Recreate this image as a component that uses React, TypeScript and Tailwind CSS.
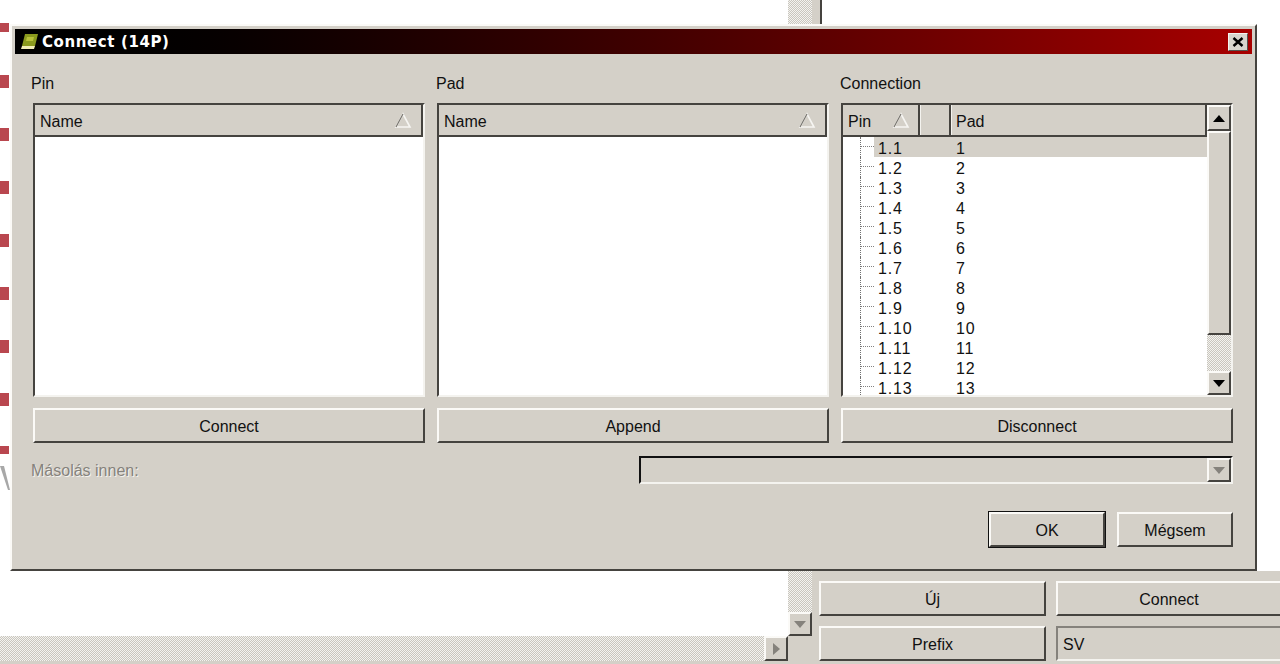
const FONT = "font-['Liberation_Sans',Arial,sans-serif]";
const RAISED = "border-2 border-t-[#fbfaf7] border-l-[#fbfaf7] border-r-[#45433f] border-b-[#45433f] bg-[#d4d0c8]";
const CHECKER = "bg-[image:repeating-conic-gradient(#c9c6be_0_25%,#f4f3f0_0_50%)] bg-[length:2px_2px]";

function Btn({ label, className = "" }: { label: string; className?: string }) {
  return (
    <div className={`${RAISED} flex items-center justify-center pt-[2px] text-[16px] text-[#111] ${className}`}>
      {label}
    </div>
  );
}

function SortMark() {
  return (
    <svg width="18" height="17" viewBox="0 0 18 17" className="shrink-0">
      <path d="M2 15 L16 15 L9 2 Z" fill="none" stroke="#f6f5f2" strokeWidth="1.6" />
      <path d="M2 15 L9 2" fill="none" stroke="#77746e" strokeWidth="1.2" />
    </svg>
  );
}

function Arrow({ dir, color = "#000", w = 14, h = 8 }: { dir: "up" | "down" | "right"; color?: string; w?: number; h?: number }) {
  const d =
    dir === "up"
      ? `M0 ${h} L${w} ${h} L${w / 2} 0 Z`
      : dir === "down"
      ? `M0 0 L${w} 0 L${w / 2} ${h} Z`
      : `M0 0 L${w} ${h / 2} L0 ${h} Z`;
  return (
    <svg width={w} height={h} viewBox={`0 0 ${w} ${h}`}>
      <path d={d} fill={color} />
    </svg>
  );
}

function EmptyList() {
  return (
    <div className="h-[294px] border-2 border-t-[#45433f] border-l-[#45433f] border-r-[#f4f3ef] border-b-[#f4f3ef] bg-white flex flex-col">
      <div className="h-[32px] shrink-0 border-b-2 border-b-[#45433f] border-r-2 border-r-[#45433f] bg-[#d4d0c8] flex items-center justify-between pl-[5px] pr-[9px] text-[16px] text-[#111]">
        <span className="pt-[4px]">Name</span>
        <SortMark />
      </div>
    </div>
  );
}

const rows = Array.from({ length: 13 }, (_, i) => ({ pin: `1.${i + 1}`, pad: `${i + 1}` }));

function ConnectionList() {
  return (
    <div className="h-[294px] border-2 border-t-[#45433f] border-l-[#45433f] border-r-[#f4f3ef] border-b-[#f4f3ef] bg-white flex overflow-hidden">
      <div className="flex-1 min-w-0 flex flex-col overflow-hidden">
        <div className="h-[32px] shrink-0 flex text-[16px] text-[#111] bg-[#d4d0c8] border-b-2 border-b-[#45433f]">
          <div className="w-[77px] flex items-center justify-between pl-[5px] pr-[8px] border-r-2 border-r-[#45433f]">
            <span className="pt-[4px]">Pin</span>
            <SortMark />
          </div>
          <div className="w-[31px] border-l border-l-[#f4f3ef] border-r-2 border-r-[#45433f]" />
          <div className="flex-1 flex items-center pl-[4px] border-l border-l-[#f4f3ef] border-r-2 border-r-[#45433f]">
            <span className="pt-[4px]">Pad</span>
          </div>
        </div>
        <div className="flex-1 overflow-hidden text-[16px] tracking-[0.8px] text-[#111]">
          {rows.map((r, i) => (
            <div key={r.pin} className="h-[20px] flex pl-[17px] leading-[20px]">
              <div className="w-[14px] h-[20px] shrink-0 border-l border-dotted border-l-[#707070]">
                <div className="h-[10px] border-b border-dotted border-b-[#808080]" />
              </div>
              <div className={`flex-1 flex ${i === 0 ? "bg-[#d4d0c8]" : ""}`}>
                <span className="w-[82px] pl-[4px] pt-[2px]">{r.pin}</span>
                <span className="pt-[2px]">{r.pad}</span>
              </div>
            </div>
          ))}
        </div>
      </div>
      <div className="w-[24px] shrink-0 flex flex-col bg-[#d4d0c8]">
        <div className={`${RAISED} h-[26px] flex items-center justify-center`}>
          <Arrow dir="up" w={12} h={7} />
        </div>
        <div className={`${RAISED} h-[204px]`} />
        <div className={`${CHECKER} flex-1`} />
        <div className={`${RAISED} h-[24px] flex items-center justify-center`}>
          <Arrow dir="down" w={12} h={7} />
        </div>
      </div>
    </div>
  );
}

function Dialog() {
  return (
    <div className={`${FONT} absolute left-[10px] top-[24px] w-[1247px] h-[547px] ${RAISED} p-[3px] flex flex-col`}>
      <div className="h-[25px] shrink-0 bg-gradient-to-r from-black to-[#a80000] flex items-center pl-[6px] pr-[4px]">
        <svg width="18" height="17" viewBox="0 0 18 17" className="shrink-0">
          <path d="M4 1 L17 1 L14 13 L1 13 Z" fill="#8a9a1e" />
          <path d="M1 13 L14 13 L13 16 L0 16 Z" fill="#f1eeb8" />
          <path d="M6 4 L13 4 L12 8 L5 8 Z" fill="#b8c23a" />
        </svg>
        <span className="ml-[3px] pt-[2px] text-white font-bold text-[15px] tracking-[0.6px] font-['DejaVu_Sans',sans-serif]">
          Connect (14P)
        </span>
        <div className="ml-auto w-[20px] h-[18px] bg-[#d8d5cd] border border-t-[#f4f3ef] border-l-[#f4f3ef] border-r-[#55534f] border-b-[#55534f] flex items-center justify-center">
          <svg width="12" height="10" viewBox="0 0 12 10">
            <path d="M1.5 1 L10.5 9 M10.5 1 L1.5 9" stroke="#000" strokeWidth="2.4" />
          </svg>
        </div>
      </div>
      <div className="flex-1 pl-[18px] pr-[19px] pt-[19px] text-[#111]">
        <div className="grid grid-cols-3 gap-x-[12px]">
          <div className="h-[20px] mb-[10px] pt-[1px] -ml-[2px] text-[16px] leading-[20px]">Pin</div>
          <div className="h-[20px] mb-[10px] pt-[1px] -ml-[1px] text-[16px] leading-[20px]">Pad</div>
          <div className="h-[20px] mb-[10px] pt-[1px] -ml-[1px] text-[16px] leading-[20px]">Connection</div>
          <EmptyList />
          <EmptyList />
          <ConnectionList />
          <Btn label="Connect" className="h-[35px] mt-[11px]" />
          <Btn label="Append" className="h-[35px] mt-[11px]" />
          <Btn label="Disconnect" className="h-[35px] mt-[11px]" />
        </div>
        <div className="mt-[13px] h-[28px] flex items-center justify-between">
          <span className="-ml-[2px] pt-[2px] text-[16px] text-[#85827c] [text-shadow:1px_1px_0_#f4f3ef]">Másolás innen:</span>
          <div className="w-[594px] h-[28px] border-2 border-t-[#111] border-l-[#111] border-r-[#f4f3ef] border-b-[#f4f3ef] flex justify-end items-center">
            <div className={`${RAISED} w-[24px] h-[24px] flex items-center justify-center`}>
              <Arrow dir="down" color="#85827c" w={12} h={7} />
            </div>
          </div>
        </div>
        <div className="mt-[27px] flex justify-end items-center gap-[11px]">
          <div className="border border-[#111]">
            <Btn label="OK" className="w-[116px] h-[35px]" />
          </div>
          <Btn label="Mégsem" className="w-[116px] h-[35px]" />
        </div>
      </div>
    </div>
  );
}

export default function App() {
  return (
    <div className={`${FONT} relative w-[1280px] h-[664px] overflow-hidden bg-white flex`}>
      {/* left: canvas with ticks + horizontal scrollbar */}
      <div className="w-[788px] shrink-0 flex flex-col">
        <div className="flex-1 bg-white pt-[23px] flex flex-col gap-[40px]">
          <div className="w-[9px] h-[9px] mb-[3px] bg-[#b9474f]" />
          {[0, 1, 2, 3, 4, 5, 6].map((i) => (
            <div key={i} className="w-[9px] h-[13px] bg-[#b9474f]" />
          ))}
          <div className="w-[9px] h-[8px] bg-[#b9474f]" />
          <svg width="10" height="26" viewBox="0 0 10 26" className="-mt-[29px] shrink-0">
            <path d="M0 1 L4 1 L10 25 L8 25 Z" fill="#a8a8a8" />
          </svg>
        </div>
        <div className="h-[25px] shrink-0 flex">
          <div className={`${CHECKER} flex-1`} />
          <div className={`${RAISED} w-[24px] flex items-center justify-center`}>
            <Arrow dir="right" color="#85827c" w={7} h={12} />
          </div>
        </div>
        <div className="h-[3px] shrink-0 bg-[#d4d0c8]" />
      </div>
      {/* vertical scrollbar */}
      <div className="w-[24px] shrink-0 flex flex-col">
        <div className={`${CHECKER} flex-1`} />
        <div className={`${RAISED} h-[24px] flex items-center justify-center`}>
          <Arrow dir="down" color="#85827c" w={12} h={7} />
        </div>
        <div className="h-[28px] shrink-0 bg-[#d4d0c8]" />
      </div>
      {/* right panel */}
      <div className="flex-1 flex flex-col">
        <div className="h-[571px] shrink-0 flex">
          <div className="w-[8px] bg-[#d4d0c8]" />
          <div className="w-[2px] bg-[#45433f]" />
          <div className="flex-1 bg-white" />
        </div>
        <div className="flex-1 bg-[#d4d0c8] pt-[10px] pl-[7px] grid grid-cols-[227px_1fr] gap-x-[10px] gap-y-[10px] auto-rows-[35px]">
          <Btn label="Új" />
          <Btn label="Connect" className="border-r-0" />
          <Btn label="Prefix" />
          <div className="border-2 border-r-0 border-t-[#85827c] border-l-[#85827c] border-b-[#f4f3ef] flex items-center pl-[5px] pt-[2px] text-[16px] text-[#111]">
            SV
          </div>
        </div>
      </div>
      <Dialog />
    </div>
  );
}
